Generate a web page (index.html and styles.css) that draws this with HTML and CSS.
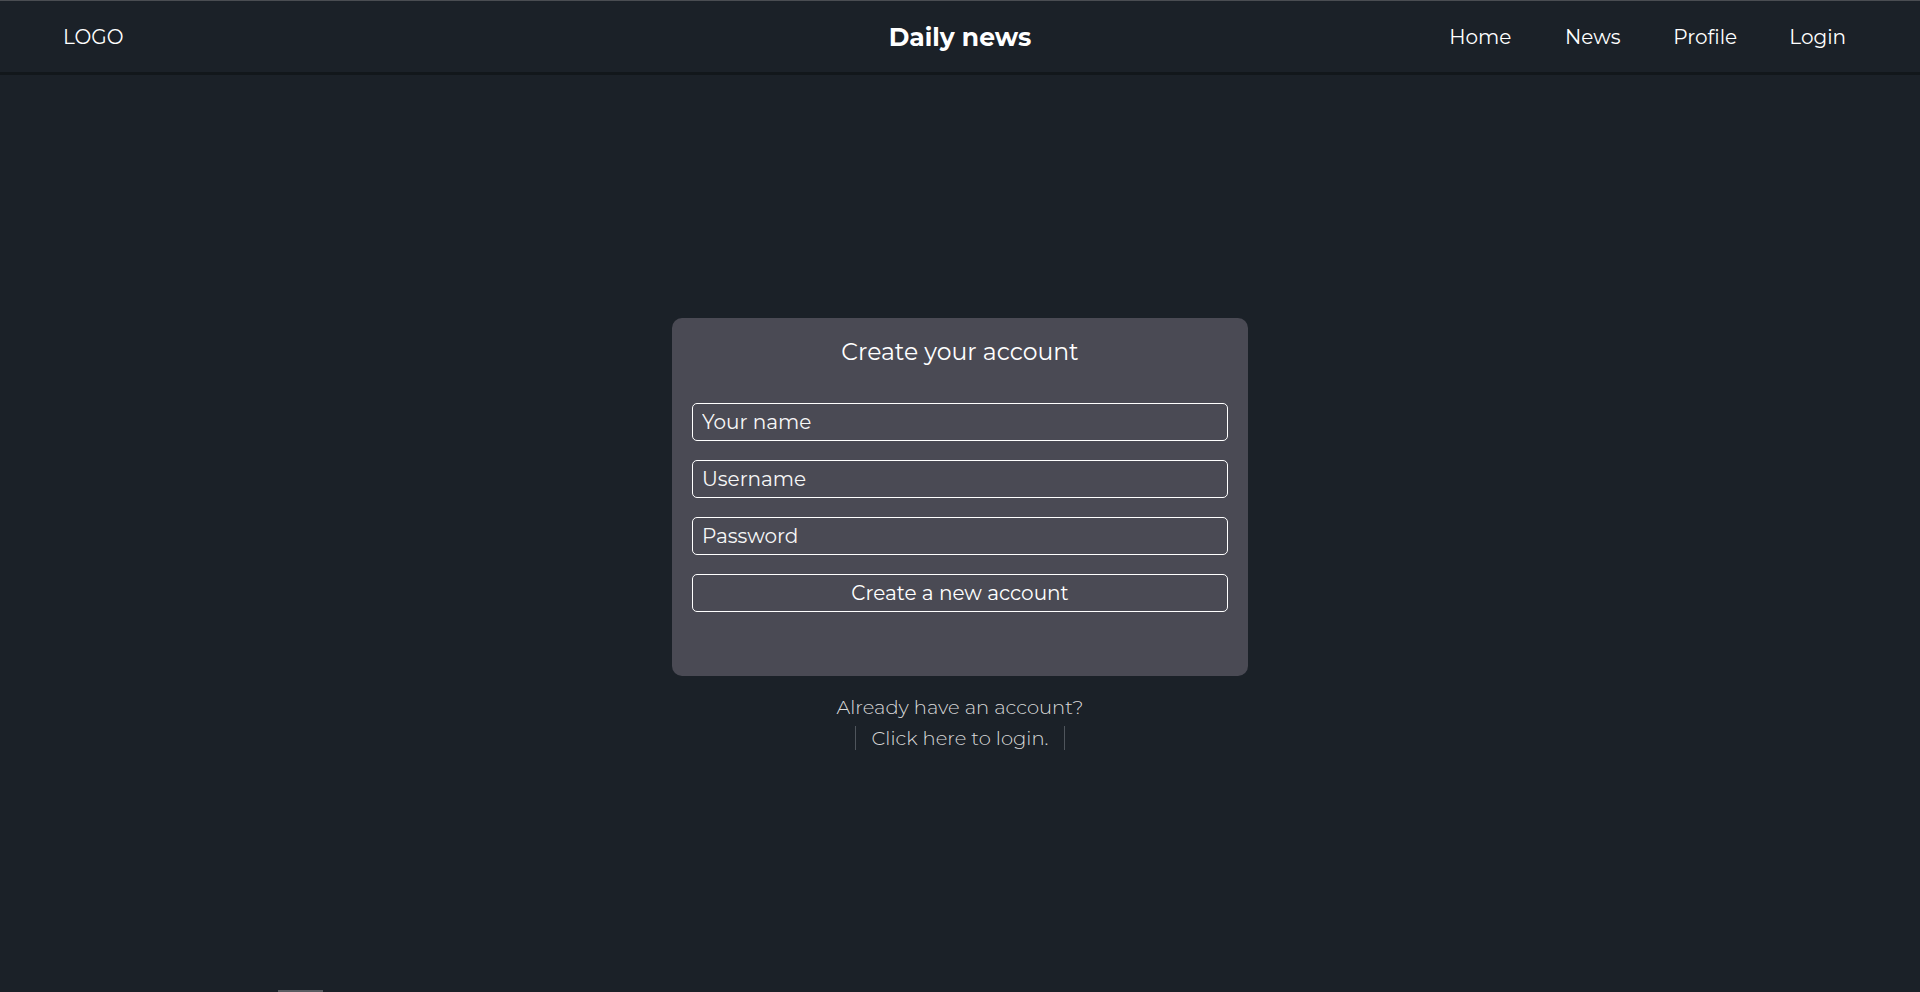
FILE: index.html
```html
<!DOCTYPE html>
<html lang="en">
<head>
<meta charset="utf-8">
<title>Daily news</title>
<link rel="stylesheet" href="styles.css">
</head>
<body>
<header class="topbar">
  <div class="logo">LOGO</div>
  <div class="brand">Daily news</div>
  <nav class="nav">
    <a class="nav-link" href="#">Home</a>
    <a class="nav-link" href="#">News</a>
    <a class="nav-link" href="#">Profile</a>
    <a class="nav-link" href="#">Login</a>
  </nav>
</header>
<main class="main">
  <div class="auth">
    <form class="card">
      <h2 class="card-title">Create your account</h2>
      <input class="field" type="text" placeholder="Your name">
      <input class="field" type="text" placeholder="Username">
      <input class="field" type="password" placeholder="Password">
      <button class="submit" type="button">Create a new account</button>
    </form>
    <p class="hint">Already have an account?</p>
    <a class="hint-link" href="#">Click here to login.</a>
  </div>
</main>
<div class="scroll-thumb"></div>
</body>
</html>
```
FILE: styles.css
```css
* { box-sizing: border-box; }
html, body { height: 100%; }
body {
  margin: 0;
  background: #1b2128;
  color: #fff;
  font-family: Montserrat, Inter, "Noto Sans", sans-serif;
  display: flex;
  flex-direction: column;
  overflow: hidden;
}
.topbar {
  height: 75px;
  border-top: 1px solid #4a4d52;
  border-bottom: 3px solid #12171b;
  display: grid;
  grid-template-columns: 1fr auto 1fr;
  align-items: center;
  padding: 0 46px;
  flex: none;
}
.logo {
  padding-left: 17px;
  font-size: 20px;
  font-weight: 400;
  color: #fff;
}
.brand {
  font-size: 25px;
  font-weight: 700;
  color: #fff;
}
.nav {
  display: flex;
  justify-content: flex-end;
}
.nav-link {
  width: 112.5px;
  text-align: center;
  color: #fff;
  text-decoration: none;
  font-size: 20px;
}
.main {
  flex: 1;
  display: flex;
  align-items: center;
  justify-content: center;
}
.auth {
  display: flex;
  flex-direction: column;
  align-items: center;
}
.card {
  width: 576px;
  background: #4a4a54;
  border-radius: 10px;
  padding: 20px 20px 64px;
  display: flex;
  flex-direction: column;
  gap: 19px;
}
.card-title {
  margin: 0 0 19px;
  font-size: 23.5px;
  font-weight: 400;
  line-height: 27px;
  text-align: center;
}
.field, .submit {
  height: 38px;
  width: 100%;
  background: transparent;
  border: 1px solid #fff;
  border-radius: 5px;
  color: #fff;
  font-family: inherit;
  font-size: 20px;
  padding: 0 9px;
  outline: none;
}
.field::placeholder { color: #f7f7f7; opacity: 1; }
.submit { text-align: center; cursor: pointer; }
.hint {
  margin: 16px 0 0;
  font-size: 19.5px;
  font-weight: 300;
  line-height: 30px;
  color: #dadada;
}
.hint-link {
  margin-top: 4px;
  font-size: 19.5px;
  font-weight: 300;
  line-height: 24px;
  color: #dadada;
  text-decoration: none;
  padding: 0 16px;
  border-left: 1px solid #4f555c;
  border-right: 1px solid #4f555c;
}
.scroll-thumb {
  position: fixed;
  left: 278px;
  bottom: 0;
  width: 45px;
  height: 2px;
  background: #5a5d62;
}
```
